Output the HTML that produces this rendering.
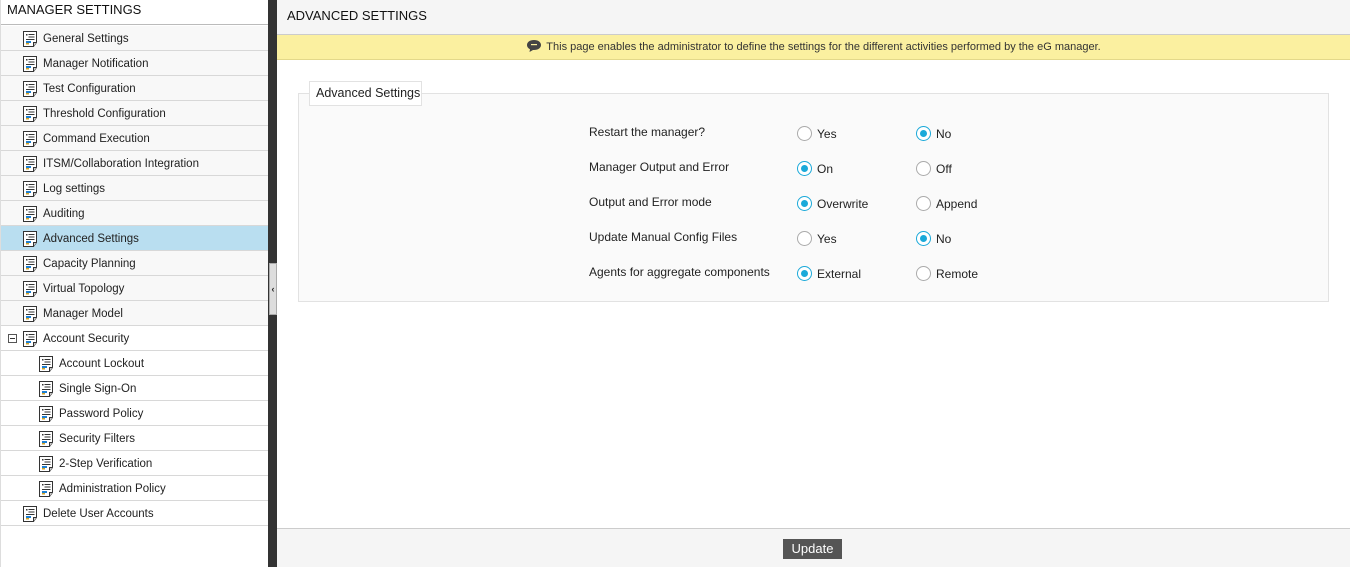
<!DOCTYPE html>
<html><head><meta charset="utf-8"><style>
*{margin:0;padding:0;box-sizing:border-box}
body{width:1350px;height:567px;overflow:hidden;font-family:"Liberation Sans",sans-serif;font-size:12px;color:#222;background:#fff;position:relative}
#side{position:absolute;left:0;top:0;width:268px;height:567px;background:#fff;border-left:1px solid #ddd}
#side .hd{height:25px;line-height:20px;padding-left:6px;font-size:13px;color:#111;border-bottom:1px solid #bbb}
.it{position:absolute;left:1px;width:267px;height:25px;border-bottom:1px solid #d8d8d8;background:#f8f8f8}
.it span{position:absolute;top:7px;font-size:11.5px;color:#222}
.it svg{position:absolute;top:5px}
#bar{position:absolute;left:268px;top:0;width:9px;height:567px;background:#333}
#hand{position:absolute;left:269px;top:263px;width:8px;height:52px;background:#ddd;border:1px solid #aaa;font-size:9px;line-height:50px;text-align:center;color:#222;font-weight:bold}
#main{position:absolute;left:277px;top:0;right:0;height:567px}
#mh{height:35px;background:#f5f5f5;border-bottom:1px solid #ccc;line-height:32px;padding-left:10px;font-size:13px;color:#111}
#ban{height:25px;background:#fbf0a0;border-bottom:1px solid #e3d88a;text-align:center;line-height:24px;font-size:11px;color:#333}
#fs{position:absolute;left:21px;top:93px;width:1031px;height:209px;background:#fafafa;border:1px solid #e2e2e2}
#lg{position:absolute;left:32px;top:81px;width:113px;height:25px;background:#fff;border:1px solid #e2e2e2;line-height:23px;padding-left:6px;font-size:12.5px;color:#222}
.row{position:absolute;left:312px;font-size:12px;color:#222}
.rad{position:absolute;width:15px;height:15px;border-radius:50%;border:1px solid #aaa;background:#fff}
.rad.on{border-color:#1aa9d9}
.rad.on:after{content:"";position:absolute;left:3px;top:3px;width:7px;height:7px;border-radius:50%;background:#1aa9d9}
.rl{position:absolute;font-size:12px;color:#222}
#ft{position:absolute;left:0;top:528px;right:0;height:39px;background:#f5f5f5;border-top:1px solid #ccc}
#btn{position:absolute;left:506px;top:10px;width:59px;height:20px;background:#555;color:#fff;font-size:13px;text-align:center;line-height:20px}
</style></head><body>
<div id="side"><div class="hd">MANAGER SETTINGS</div></div>
<svg width="0" height="0" style="position:absolute"><defs><symbol id="ic" viewBox="0 0 14 16"><path d="M0.5 0.5H13.5V11.5L10.5 15.5H0.5Z" fill="#fff" stroke="#333"/><path d="M10.5 15.5V11.5H13.5" fill="#ccc" stroke="#333"/><rect x="3" y="3" width="1.5" height="1.5" fill="#333"/><rect x="5.5" y="3" width="6" height="1" fill="#333"/><rect x="5.5" y="5.5" width="6" height="1" fill="#333"/><rect x="3" y="8" width="8.5" height="1" fill="#333"/><rect x="3" y="10" width="5" height="2" fill="#1e7fd0"/><rect x="3" y="12" width="3" height="1.5" fill="#d3a020"/></symbol></defs></svg>
<div id="items"></div>
<script>
var L=[["General Settings",0],["Manager Notification",0],["Test Configuration",0],["Threshold Configuration",0],["Command Execution",0],["ITSM/Collaboration Integration",0],["Log settings",0],["Auditing",0],["Advanced Settings",0,1],["Capacity Planning",0],["Virtual Topology",0],["Manager Model",0],["Account Security",0,0,1],["Account Lockout",1],["Single Sign-On",1],["Password Policy",1],["Security Filters",1],["2-Step Verification",1],["Administration Policy",1],["Delete User Accounts",0]];
var h="";L.forEach(function(a,i){var t=26+i*25,ix=a[1]?38:22;h+='<div class="it" style="top:'+t+'px'+(a[1]||a[3]||i==19?';background:#fff':'')+(a[2]?';background:#b9def0':'')+'">'+(a[3]?'<div style="position:absolute;left:7px;top:8px;width:9px;height:9px;border:1px solid #555;background:#fff"><div style="position:absolute;left:1px;top:3px;width:5px;height:1px;background:#333"></div></div>':'')+'<svg width="14" height="16" style="left:'+ix+'px"><use href="#ic"/></svg><span style="left:'+(ix+20)+'px">'+a[0]+'</span></div>';});
document.getElementById("items").innerHTML=h;
</script>
<div id="bar"></div><div id="hand">‹</div>
<div id="main">
<div id="mh">ADVANCED SETTINGS</div>
<div id="ban"><svg width="16" height="14" style="vertical-align:-3px;margin-right:4px" viewBox="0 0 16 14"><path d="M8 1C4 1 1 3 1 6c0 2 1.3 3.4 3 4.2L3.5 13 7 11c.3 0 .7 0 1 0 4 0 7-2 7-5S12 1 8 1z" fill="#444"/><rect x="5" y="5" width="6" height="1.2" fill="#fbf0a0"/></svg>This page enables the administrator to define the settings for the different activities performed by the eG manager.</div>
<div id="fs"></div>
<div id="lg">Advanced Settings</div>
<div id="form"></div>
<script>
var R=[["Restart the manager?","Yes","No",2],["Manager Output and Error","On","Off",1],["Output and Error mode","Overwrite","Append",1],["Update Manual Config Files","Yes","No",2],["Agents for aggregate components","External","Remote",1]];
var f="";R.forEach(function(r,i){var c=133+i*35;f+='<div class="row" style="top:'+(c-8)+'px">'+r[0]+'</div><div class="rad'+(r[3]==1?' on':'')+'" style="left:520px;top:'+(c-7)+'px"></div><div class="rl" style="left:540px;top:'+(c-6)+'px">'+r[1]+'</div><div class="rad'+(r[3]==2?' on':'')+'" style="left:639px;top:'+(c-7)+'px"></div><div class="rl" style="left:659px;top:'+(c-6)+'px">'+r[2]+'</div>';});
document.getElementById("form").innerHTML=f;
</script>
<div id="ft"><div id="btn">Update</div></div>
</div>
</body></html>
